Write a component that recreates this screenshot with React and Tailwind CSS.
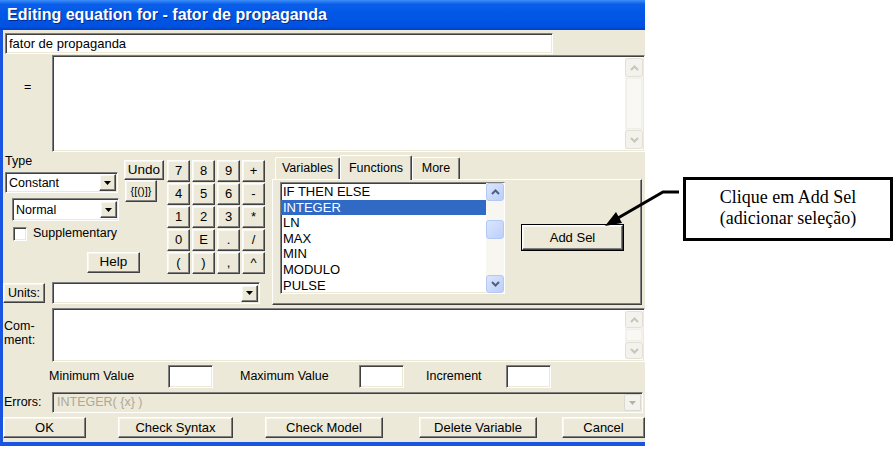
import React from "react";

const raised =
  "bg-[#ece9d8] border border-t-white border-l-white border-r-[#404040] border-b-[#404040] shadow-[inset_-1px_-1px_0_#808080,inset_1px_1px_0_#f7f6f0] flex items-center justify-center";
const sunken =
  "border border-t-[#808080] border-l-[#808080] border-r-white border-b-white shadow-[inset_1px_1px_0_#404040,inset_-1px_-1px_0_#ece9d8]";

function Btn({ className = "", children }) {
  return <div className={`${raised} ${className}`}>{children}</div>;
}

function Tri({ color = "#000" }) {
  return (
    <svg width="7" height="4" viewBox="0 0 7 4">
      <polygon points="0,0 7,0 3.5,4" fill={color} />
    </svg>
  );
}

function Chev({ up = true, color }) {
  return (
    <svg width="9" height="6" viewBox="0 0 9 6">
      <path
        d={up ? "M1 5 L4.5 1.5 L8 5" : "M1 1 L4.5 4.5 L8 1"}
        stroke={color}
        strokeWidth="2"
        fill="none"
      />
    </svg>
  );
}

function Combo({ className = "", text }) {
  return (
    <div className={`${sunken} bg-white flex items-center ${className}`}>
      <span className="flex-1 pl-[3px] leading-[14px]">{text}</span>
      <div className={`${raised} w-[17px] h-[17px] mr-[1px]`}>
        <Tri />
      </div>
    </div>
  );
}

function DisScroll({ btn = "h-[19px]" }) {
  const b =
    "rounded-[3px] border border-[#e2e0d5] bg-[#f3f2ec] flex items-center justify-center";
  return (
    <div className="w-[18px] flex flex-col bg-[#f4f3ee] my-[2px] mr-[1px]">
      <div className={`${b} ${btn}`}>
        <Chev up color="#c9c6b7" />
      </div>
      <div className="flex-1 m-[1px] border border-[#efeee7] bg-[#f9f8f4]" />
      <div className={`${b} ${btn}`}>
        <Chev up={false} color="#c9c6b7" />
      </div>
    </div>
  );
}

function BlueScroll() {
  const b =
    "rounded-[3px] border border-[#b4c8f6] bg-[linear-gradient(135deg,#dbe6fd,#bccff9)] flex items-center justify-center";
  return (
    <div className="w-[18px] flex flex-col bg-[#f7f6f1]">
      <div className={`${b} h-[18px]`}>
        <Chev up color="#4d6185" />
      </div>
      <div className={`${b} h-[19px] mt-[19px]`} />
      <div className="flex-1" />
      <div className={`${b} h-[18px]`}>
        <Chev up={false} color="#4d6185" />
      </div>
    </div>
  );
}

const keys = ["7", "8", "9", "+", "4", "5", "6", "-", "1", "2", "3", "*", "0", "E", ".", "/", "(", ")", ",", "^"];
const funcs = ["IF THEN ELSE", "INTEGER", "LN", "MAX", "MIN", "MODULO", "PULSE"];

export default function App() {
  return (
    <div className="w-[895px] h-[449px] bg-white relative flex items-start overflow-hidden font-['Liberation_Sans',Arial,sans-serif] text-[12.5px] text-black">
      {/* Dialog */}
      <div className="w-[645px] h-[446px] flex flex-col bg-[#1a55e2] shrink-0">
        <div className="h-[30px] flex items-center pl-[7px] pb-[1px] bg-[linear-gradient(180deg,#3d8ef8_0%,#0a5ee9_14%,#0057e6_50%,#0052e0_88%,#0040c8_100%)] text-white font-bold text-[16px] [text-shadow:1px_1px_0_#0a2a8a]">
          Editing equation for - fator de propaganda
        </div>
        <div className="ml-[3px] h-[412px] bg-[#ece9d8] flex flex-col">
          {/* name */}
          <div className={`${sunken} bg-white ml-[2px] mt-[3px] w-[548px] h-[21px] flex items-center pl-[3px] text-[13px]`}>
            fator de propaganda
          </div>
          {/* equation */}
          <div className="flex h-[97px] mt-[1px]">
            <div className="w-[49px] pl-[21px] pt-[23px]">=</div>
            <div className={`flex-1 bg-white flex ${sunken}`}>
              <div className="flex-1" />
              <DisScroll />
            </div>
          </div>
          {/* middle */}
          <div className="flex h-[153px]">
            <div className="w-[267px] flex flex-col">
              <div className="flex h-[130px]">
                <div className="w-[160px] flex flex-col">
                  <div className="flex">
                    <div className="w-[121px] flex flex-col">
                      <div className="ml-[2px] mt-[2px] leading-[14px]">Type</div>
                      <Combo className="ml-[2px] mt-[4px] w-[113px] h-[21px]" text="Constant" />
                      <Combo className="ml-[9px] mt-[5px] w-[107px] h-[23px]" text="Normal" />
                      <div className="flex items-center mt-[5px] ml-[10px] h-[15px]">
                        <div className={`w-[14px] h-[14px] bg-white ${sunken}`} />
                        <span className="ml-[6px]">Supplementary</span>
                      </div>
                    </div>
                    <div className="w-[39px] flex flex-col">
                      <Btn className="mt-[8px] h-[20px] w-[40px] text-[13.5px]">Undo</Btn>
                      <Btn className="ml-[1px] w-[32px] h-[22px] text-[11px]">{"{[()]}"}</Btn>
                    </div>
                  </div>
                  <Btn className="ml-[84px] mt-[11px] w-[53px] h-[21px] text-[13.5px]">Help</Btn>
                </div>
                <div className="ml-[4px] mt-[8px] grid grid-cols-[23px_23px_23px_23px] auto-rows-[22px] gap-x-[2px] gap-y-[1px] h-fit">
                  {keys.map((k) => (
                    <Btn key={k} className="text-[13px]">
                      {k}
                    </Btn>
                  ))}
                </div>
              </div>
              <div className="flex items-center h-[22px]">
                <Btn className="w-[42px] h-[20px]">Units:</Btn>
                <Combo className="ml-[7px] w-[208px] h-[22px]" text="" />
              </div>
            </div>
            {/* tabs */}
            <div className="ml-[2px] w-[370px] flex flex-col">
              <div className="flex items-end h-[27px] pl-[3px]">
                <div className="w-[65px] h-[22px] bg-[#ece9d8] border border-t-white border-l-white border-r-[#404040] border-b-0 rounded-t-[2px] shadow-[inset_-1px_0_0_#808080] flex items-center justify-center">
                  Variables
                </div>
                <div className="relative z-10 -mb-[1px] w-[72px] h-[25px] bg-[#ece9d8] border border-t-white border-l-white border-r-[#404040] border-b-0 rounded-t-[2px] shadow-[inset_-1px_0_0_#808080] flex items-start pt-[3px] justify-center">
                  Functions
                </div>
                <div className="w-[48px] h-[22px] bg-[#ece9d8] border border-t-white border-l-white border-r-[#404040] border-b-0 rounded-t-[2px] shadow-[inset_-1px_0_0_#808080] flex items-center justify-center">
                  More
                </div>
              </div>
              <div className="h-[126px] border border-t-white border-l-white border-r-[#404040] border-b-[#404040] shadow-[inset_-1px_-1px_0_#808080] flex items-start">
                <div className={`ml-[7px] mt-[2px] w-[225px] h-[112px] bg-white flex ${sunken}`}>
                  <div className="flex-1 overflow-hidden pt-[1px] text-[13px]">
                    {funcs.map((f) => (
                      <div
                        key={f}
                        className={`h-[15.6px] leading-[15.6px] px-[2px] ${
                          f === "INTEGER" ? "bg-[#316ac5] text-white" : ""
                        }`}
                      >
                        {f}
                      </div>
                    ))}
                  </div>
                  <BlueScroll />
                </div>
                <div className="ml-[16px] mt-[44px] w-[103px] h-[27px] border border-black flex">
                  <Btn className="flex-1 text-[13px]">Add Sel</Btn>
                </div>
              </div>
            </div>
          </div>
          {/* comment */}
          <div className="flex h-[54px] mt-[3px]">
            <div className="w-[49px] pl-[1px] pt-[11px] leading-[14px]">
              Com-
              <br />
              ment:
            </div>
            <div className={`flex-1 bg-white flex ${sunken}`}>
              <div className="flex-1" />
              <DisScroll btn="h-[17px]" />
            </div>
          </div>
          {/* min / max */}
          <div className="flex items-center h-[23px] mt-[3px]">
            <div className="w-[165px] pl-[46px]">Minimum Value</div>
            <div className={`${sunken} bg-white w-[45px] h-[23px]`} />
            <div className="w-[146px] pl-[27px]">Maximum Value</div>
            <div className={`${sunken} bg-white w-[45px] h-[23px]`} />
            <div className="w-[102px] pl-[22px]">Increment</div>
            <div className={`${sunken} bg-white w-[45px] h-[23px]`} />
          </div>
          {/* errors */}
          <div className="flex items-center h-[21px] mt-[4px]">
            <div className="w-[49px] pl-[1px]">Errors:</div>
            <div className={`${sunken} bg-[#ece9d8] w-[591px] h-[21px] flex items-center`}>
              <span className="flex-1 pl-[4px] text-[#aca899]">INTEGER( {"{x}"} )</span>
              <div className="w-[17px] h-[17px] mr-[1px] border border-[#dcdad0] rounded-[2px] bg-[#f3f2ec] flex items-center justify-center">
                <Tri color="#b5b2a4" />
              </div>
            </div>
          </div>
          {/* buttons */}
          <div className="flex h-[21px] mt-[4px] text-[13px]">
            <Btn className="w-[83px]">OK</Btn>
            <Btn className="ml-[32px] w-[115px]">Check Syntax</Btn>
            <Btn className="ml-[32px] w-[118px]">Check Model</Btn>
            <Btn className="ml-[36px] w-[118px]">Delete Variable</Btn>
            <Btn className="ml-[25px] w-[83px]">Cancel</Btn>
          </div>
        </div>
      </div>

      {/* callout */}
      <div className="ml-[38px] mt-[177px] w-[210px] h-[64px] border-[3px] border-black flex flex-col items-center justify-center pb-[3px] font-['Liberation_Serif','Times_New_Roman',serif] text-[18px] leading-[21px]">
        <div>Clique em Add Sel</div>
        <div>(adicionar seleção)</div>
      </div>

      <svg className="absolute top-0 left-0 pointer-events-none" width="895" height="449">
        <polyline points="679,192 663,192 618,218" fill="none" stroke="#000" strokeWidth="3" />
        <polygon points="605,226 616,212 622,223" fill="#000" />
      </svg>
    </div>
  );
}
